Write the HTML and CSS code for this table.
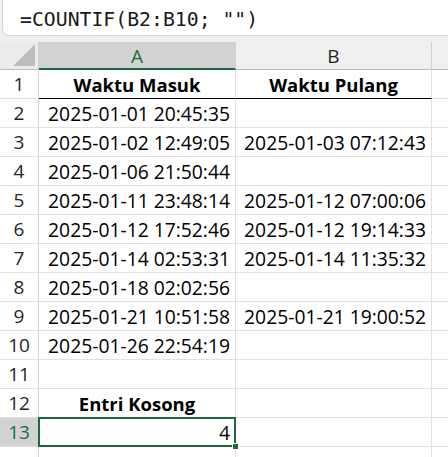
FILE: index.html
```html
<!DOCTYPE html>
<html>
<head>
<meta charset="utf-8">
<link rel="stylesheet" href="styles.css">
</head>
<body>
<div class="app">
  <div class="fbar"><div class="fbox">=COUNTIF(B2:B10; "")</div></div>
  <div class="sheet">
    <div class="corner"><svg width="22" height="22" viewBox="0 0 22 22"><polygon points="22,0 22,22 0,22" fill="#bdbdbd"/></svg></div>
    <div class="ch sel">A</div>
    <div class="ch">B</div>
    <div class="ch last"></div>

    <div class="rh">1</div><div class="c hd">Waktu Masuk</div><div class="c hd">Waktu Pulang</div><div class="c e"></div>
    <div class="rh">2</div><div class="c">2025-01-01 20:45:35</div><div class="c"></div><div class="c e"></div>
    <div class="rh">3</div><div class="c">2025-01-02 12:49:05</div><div class="c">2025-01-03 07:12:43</div><div class="c e"></div>
    <div class="rh">4</div><div class="c">2025-01-06 21:50:44</div><div class="c"></div><div class="c e"></div>
    <div class="rh">5</div><div class="c">2025-01-11 23:48:14</div><div class="c">2025-01-12 07:00:06</div><div class="c e"></div>
    <div class="rh">6</div><div class="c">2025-01-12 17:52:46</div><div class="c">2025-01-12 19:14:33</div><div class="c e"></div>
    <div class="rh">7</div><div class="c">2025-01-14 02:53:31</div><div class="c">2025-01-14 11:35:32</div><div class="c e"></div>
    <div class="rh">8</div><div class="c">2025-01-18 02:02:56</div><div class="c"></div><div class="c e"></div>
    <div class="rh">9</div><div class="c">2025-01-21 10:51:58</div><div class="c">2025-01-21 19:00:52</div><div class="c e"></div>
    <div class="rh">10</div><div class="c">2025-01-26 22:54:19</div><div class="c"></div><div class="c e"></div>
    <div class="rh">11</div><div class="c"></div><div class="c"></div><div class="c e"></div>
    <div class="rh">12</div><div class="c lbl">Entri Kosong</div><div class="c"></div><div class="c e"></div>
    <div class="rh rsel">13</div><div class="c active">4<span class="handle"></span></div><div class="c"></div><div class="c e"></div>
    <div class="rh"></div><div class="c"></div><div class="c"></div><div class="c e"></div>
  </div>
</div>
</body>
</html>
```

FILE: styles.css
```css
html, body {
  margin: 0;
  padding: 0;
  background: #ffffff;
  overflow: hidden;
}
.app {
  width: 448px;
  height: 457px;
  overflow: hidden;
  font-family: "Open Sans", "Liberation Sans", sans-serif;
}
.fbar {
  background: #f0f0f0;
  height: 42px;
  overflow: hidden;
}
.fbox {
  margin-top: -6px;
  margin-left: 2px;
  height: 42px;
  box-sizing: border-box;
  background: #ffffff;
  border: 1px solid #d6d6d6;
  border-right: none;
  border-radius: 7px 0 0 7px;
  padding: 11px 0 0 17px;
  font-family: "DejaVu Sans Mono", "Liberation Mono", monospace;
  font-size: 19.8px;
  line-height: 28px;
  color: #1a1a1a;
}
.sheet {
  display: grid;
  grid-template-columns: 39px 197px 196px 16px;
  grid-template-rows: 28px;
  grid-auto-rows: 29px;
}
.corner {
  background: #ececec;
  border-right: 1px solid #d0d0d0;
  border-bottom: 1px solid #bdbdbd;
  box-sizing: border-box;
  display: flex;
  align-items: flex-end;
  justify-content: flex-end;
  padding: 0 3px 3px 0;
}
.ch {
  background: #f0f0f0;
  border-right: 1px solid #d0d0d0;
  border-bottom: 1px solid #bdbdbd;
  box-sizing: border-box;
  display: flex;
  align-items: center;
  justify-content: center;
  font-size: 19px;
  color: #262626;
  padding-top: 1px;
}
.ch.last {
  border-right: none;
}
.ch.sel {
  background: #d2d2d2;
  color: #1e6b41;
  border-bottom: 2px solid #1e6b41;
}
.rh {
  background: #ffffff;
  border-right: 1px solid #d4d4d4;
  border-bottom: 1px solid #e1e1e1;
  box-sizing: border-box;
  display: flex;
  align-items: center;
  justify-content: center;
  font-size: 19px;
  color: #262626;
}
.rh.rsel {
  background: #d2d2d2;
  color: #1e6b41;
}
.c {
  border-right: 1px solid #e1e1e1;
  border-bottom: 1px solid #e1e1e1;
  box-sizing: border-box;
  display: flex;
  align-items: center;
  justify-content: flex-end;
  padding: 0 5px 0 0;
  font-size: 19.3px;
  color: #000000;
  white-space: nowrap;
  position: relative;
}
.c.e {
  border-right: none;
}
.c.hd {
  justify-content: center;
  font-weight: 700;
  font-size: 18.5px;
  border-bottom: 1px solid #000000;
  padding: 0;
}
.c.lbl {
  justify-content: center;
  font-weight: 700;
  font-size: 18.5px;
  padding: 0;
}
.c.active::after {
  content: "";
  position: absolute;
  left: -1px;
  top: -1px;
  right: -1px;
  bottom: -1px;
  border: 2px solid #1e6b41;
}
.handle {
  position: absolute;
  right: -4px;
  bottom: -4px;
  width: 5px;
  height: 5px;
  background: #1e6b41;
  border: 1px solid #ffffff;
  z-index: 2;
}
```
